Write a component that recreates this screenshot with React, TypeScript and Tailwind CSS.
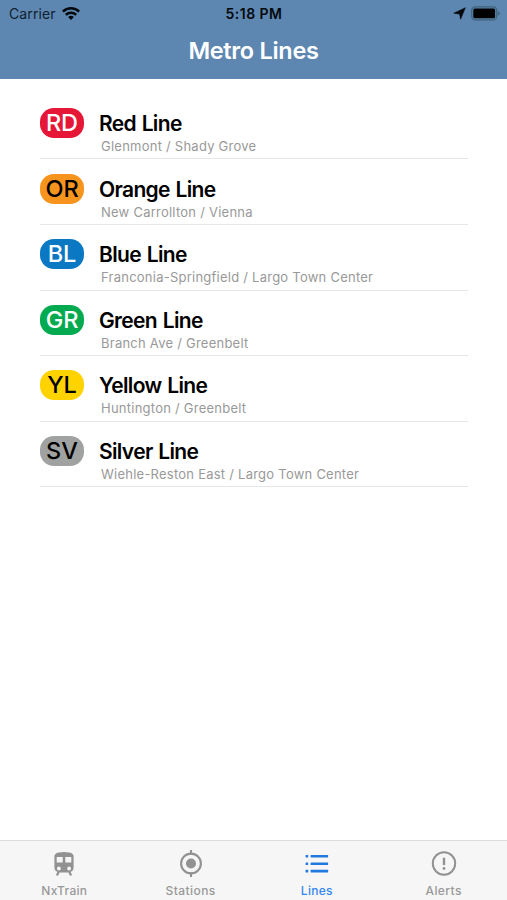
import React from "react";

type Line = {
  code: string;
  name: string;
  route: string;
  badge: string;
};

const lines: Line[] = [
  { code: "RD", name: "Red Line", route: "Glenmont / Shady Grove", badge: "bg-[#e51636] text-white tracking-[-0.2px]" },
  { code: "OR", name: "Orange Line", route: "New Carrollton / Vienna", badge: "bg-[#f7941d] text-black tracking-[-0.2px]" },
  { code: "BL", name: "Blue Line", route: "Franconia-Springfield / Largo Town Center", badge: "bg-[#0b78c4] text-white" },
  { code: "GR", name: "Green Line", route: "Branch Ave / Greenbelt", badge: "bg-[#04aa4f] text-white tracking-[-0.2px]" },
  { code: "YL", name: "Yellow Line", route: "Huntington / Greenbelt", badge: "bg-[#ffd300] text-black" },
  { code: "SV", name: "Silver Line", route: "Wiehle-Reston East / Largo Town Center", badge: "bg-[#a0a2a1] text-black" },
];

function WifiIcon() {
  return (
    <svg width="18" height="14" viewBox="0 0 18 14" fill="none" stroke="#05090d" strokeWidth="2.5">
      <path d="M0.9 4.6a11.6 11.6 0 0 1 16.2 0" />
      <path d="M3.8 7.9a7.4 7.4 0 0 1 10.4 0" />
      <path d="M9 13.1l-2.9-3a4.2 4.2 0 0 1 5.8 0z" fill="#05090d" stroke="none" />
    </svg>
  );
}

function TrainIcon() {
  return (
    <svg width="20" height="24" viewBox="0 0 20 24" fill="#929292">
      <path
        fillRule="evenodd"
        d="M4.6 0.6Q10 -0.4 15.4 0.6Q19.6 1.4 19.6 4.6V15.4Q19.6 18.6 16.6 19.8L18.2 23.6H15.7L14.5 20.4H5.5L4.3 23.6H1.8L3.4 19.8Q0.4 18.6 0.4 15.4V4.6Q0.4 1.4 4.6 0.6zM2.7 5.1V10.5H8.7V5.1zM11.3 5.1V10.5H17.3V5.1zM4.9 14.6a1.9 1.9 0 1 0 0 3.8a1.9 1.9 0 1 0 0-3.8zM15.1 14.6a1.9 1.9 0 1 0 0 3.8a1.9 1.9 0 1 0 0-3.8z"
      />
    </svg>
  );
}

function StationIcon() {
  return (
    <svg width="24" height="28" viewBox="0 0 24 28" fill="none" stroke="#929292" strokeWidth="2.1">
      <circle cx="12" cy="13.5" r="9.9" />
      <circle cx="12" cy="13.5" r="5" fill="#929292" stroke="none" />
      <path d="M12 0.1V4.5M12 22.5V26.9" />
    </svg>
  );
}

function ListIcon() {
  return (
    <svg width="24" height="20" viewBox="0 0 24 20" fill="#2179e0">
      <rect x="0.6" y="1" width="2.6" height="2.6" rx="0.5" />
      <rect x="0.6" y="8.4" width="2.6" height="2.6" rx="0.5" />
      <rect x="0.6" y="15.8" width="2.6" height="2.6" rx="0.5" />
      <rect x="5.6" y="1" width="17.5" height="2.6" rx="0.5" />
      <rect x="5.6" y="8.4" width="17.5" height="2.6" rx="0.5" />
      <rect x="5.6" y="15.8" width="17.5" height="2.6" rx="0.5" />
    </svg>
  );
}

function AlertIcon() {
  return (
    <svg width="26" height="26" viewBox="0 0 26 26" fill="none" stroke="#929292" strokeWidth="2">
      <circle cx="13" cy="12.5" r="11.2" />
      <path d="M13 6.7V14.1" strokeWidth="2.4" />
      <circle cx="13" cy="17.5" r="1.4" fill="#929292" stroke="none" />
    </svg>
  );
}

const tabs = [
  { label: "NxTrain", icon: <TrainIcon />, style: "pl-[2px] text-[#999999] tracking-[0.3px]" },
  { label: "Stations", icon: <StationIcon />, style: "pl-[1px] text-[#999999] tracking-[0.45px]" },
  { label: "Lines", icon: <ListIcon />, style: "text-[#3488f0] tracking-[0.3px]" },
  { label: "Alerts", icon: <AlertIcon />, style: "text-[#999999] tracking-[0.4px]" },
];

export default function App() {
  return (
    <div className="flex h-[900px] w-[507px] flex-col overflow-hidden bg-white font-['Inter','Liberation_Sans',sans-serif]">
      <header className="h-[79px] shrink-0 bg-[#5d87b1]">
        <div className="grid h-[27px] grid-cols-3 items-center text-[14px] leading-[27px] text-[#10202f]">
          <div className="flex items-center gap-[6px] pl-[9px]">
            <span className="tracking-[0.1px]">Carrier</span>
            <WifiIcon />
          </div>
          <div className="pl-[1px] text-center font-semibold tracking-[0.45px] text-[#05090d]">5:18 PM</div>
          <div className="flex items-center justify-end gap-[5px] pr-[7px]">
            <svg width="13" height="13" viewBox="0 0 13 13" fill="#05090d">
              <path d="M12.3 0.8L7.6 12.2L6.6 7L0.8 6.2z" stroke="#05090d" strokeWidth="0.6" />
            </svg>
            <svg width="29" height="15" viewBox="0 0 29 15">
              <rect x="0.7" y="0.9" width="25" height="13" rx="3.6" fill="none" stroke="#3f6279" strokeWidth="1.2" />
              <rect x="2.3" y="2.5" width="21.8" height="9.8" rx="1.5" fill="#000" />
              <path d="M27 5.2q1.7 0.8 1.7 2.2t-1.7 2.2z" fill="#3f6279" />
            </svg>
          </div>
        </div>
        <h1 className="text-center text-[23.5px] leading-[48px] font-semibold tracking-[-0.3px] text-white">Metro Lines</h1>
      </header>

      <main className="flex-1 pt-[14.8px] pr-[39px] pl-10">
        <ul>
          {lines.map((l) => (
            <li key={l.code} className="flex h-[65.6px] border-b border-[#e6e6e6] pt-[14.3px]">
              <span className={`flex h-[30px] w-11 items-center justify-center rounded-[14px] text-[23.5px] leading-[30px] font-medium ${l.badge}`}>
                {l.code}
              </span>
              <div className="ml-[15px] whitespace-nowrap">
                <div className="text-[21px] leading-[32px] font-semibold tracking-[-0.65px] [word-spacing:1px] text-black">{l.name}</div>
                <div className="ml-[2px] text-[13px] leading-[12px] tracking-[0.24px] text-[#999999]">{l.route}</div>
              </div>
            </li>
          ))}
        </ul>
      </main>

      <nav className="grid h-[60px] shrink-0 grid-cols-4 border-t border-[#dcdcdc] bg-[#f6f6f6]">
        {tabs.map((t) => (
          <div key={t.label} className={`flex flex-col items-center ${t.style}`}>
            <div className="mt-[8px] flex h-[29px] items-center justify-center">{t.icon}</div>
            <span className="mt-[5px] text-[12px] leading-[16px] font-medium">{t.label}</span>
          </div>
        ))}
      </nav>
    </div>
  );
}
